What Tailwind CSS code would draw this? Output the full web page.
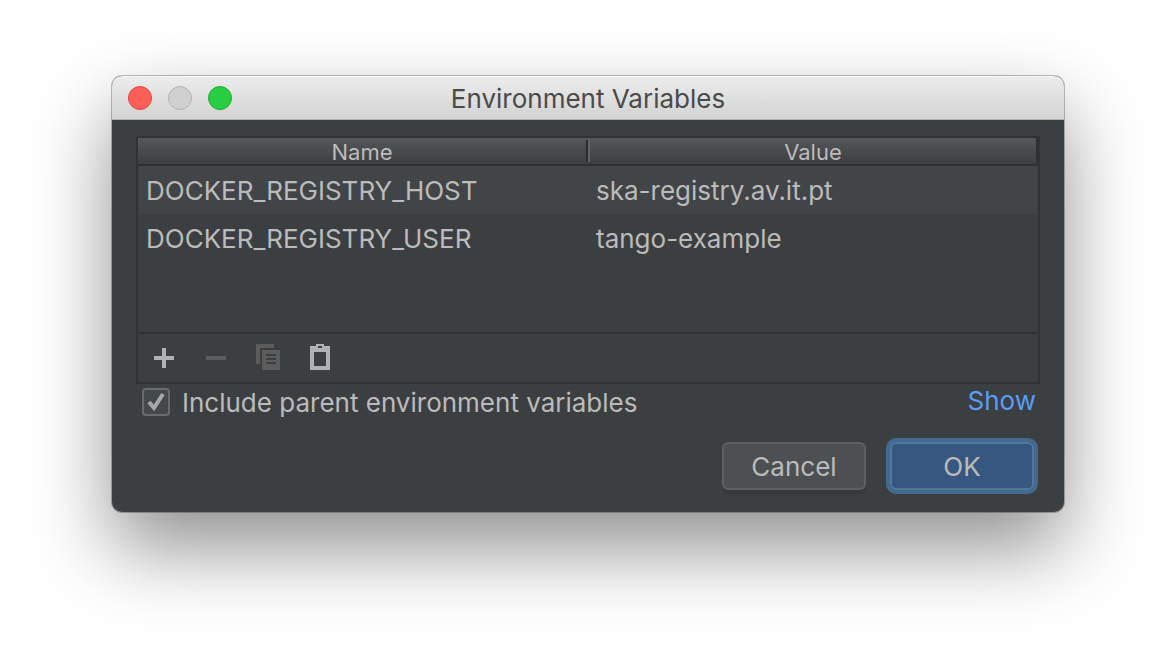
<!DOCTYPE html>
<html lang="en">
<head>
    <meta charset="UTF-8">
    <meta name="viewport" content="width=device-width, initial-scale=1.0">
    <title>Environment Variables</title>
    <!-- Tailwind CSS via CDN -->
    <script src="https://cdn.jsdelivr.net/npm/@tailwindcss/browser@4"></script>
</head>
<body class="bg-white min-h-screen px-28 py-19 font-['Inter',sans-serif] text-[26px] leading-8 text-[#bbbbbb]">
    <!-- Dialog window -->
    <div class="rounded-[10px] bg-[#3c3f41] shadow-[0_0_0_1px_rgba(0,0,0,0.25),0_36px_80px_rgba(0,0,0,0.44)]">

        <!-- Title bar -->
        <header class="grid grid-cols-[1fr_auto_1fr] items-center h-11 px-4 rounded-t-[10px] bg-linear-to-b from-[#ececec] to-[#d3d3d3] border-t border-t-[#f6f6f6] border-b border-b-[#b2b2b2]">
            <div class="flex gap-4">
                <button type="button" aria-label="Close" class="size-6 rounded-full bg-[#ff5f57] border border-[#e2463f]"></button>
                <button type="button" aria-label="Minimize" class="size-6 rounded-full bg-[#d0d0d0] border border-[#b4b4b4]"></button>
                <button type="button" aria-label="Zoom" class="size-6 rounded-full bg-[#28cd41] border border-[#1dad2b]"></button>
            </div>
            <h1 class="pt-0.5 text-[#4a4a4a]">Environment Variables</h1>
        </header>

        <div class="px-6 pt-4 pb-[18px]">
            <!-- Variables table -->
            <div class="border-2 border-[#323232]">
                <div class="min-h-[194px]">
                    <table class="w-full table-fixed border-separate border-spacing-0 text-left">
                        <thead>
                            <tr class="h-7 text-[22px] leading-6 bg-linear-to-b from-[#54585a] to-[#3b3c3e]">
                                <th class="p-0 font-normal border-b-2 border-[#2f2f2f]">
                                    <div class="flex items-center">
                                        <span class="flex-1 pt-0.5 text-center">Name</span>
                                        <span class="h-[22px] w-0.5 bg-[#2b2b2b]"></span>
                                    </div>
                                </th>
                                <th class="p-0 font-normal border-b-2 border-r-2 border-[#2f2f2f]">
                                    <div class="flex items-center">
                                        <span class="h-[22px] w-0.5 bg-[#616365]"></span>
                                        <span class="flex-1 pt-0.5 text-center">Value</span>
                                    </div>
                                </th>
                            </tr>
                        </thead>
                        <tbody>
                            <tr class="h-12 bg-[#414547]">
                                <td class="px-2 pt-0.5 pb-0">DOCKER_REGISTRY_HOST</td>
                                <td class="px-2 pt-0.5 pb-0">ska-registry.av.it.pt</td>
                            </tr>
                            <tr class="h-12">
                                <td class="px-2 pt-0.5 pb-0">DOCKER_REGISTRY_USER</td>
                                <td class="px-2 pt-0.5 pb-0">tango-example</td>
                            </tr>
                        </tbody>
                    </table>
                </div>

                <!-- Toolbar -->
                <div class="flex items-center gap-5 h-[50px] px-[10px] border-t-2 border-[#323232]">
                    <button type="button" aria-label="Add">
                        <svg class="size-8" viewBox="0 0 32 32" fill="#afb1b3" shape-rendering="crispEdges">
                            <path d="M14 6h4v8h8v4h-8v8h-4v-8H6v-4h8z"/>
                        </svg>
                    </button>
                    <button type="button" aria-label="Remove" disabled>
                        <svg class="size-8" viewBox="0 0 32 32" fill="#5c5c5c" shape-rendering="crispEdges">
                            <path d="M6 14h20v4H6z"/>
                        </svg>
                    </button>
                    <button type="button" aria-label="Copy" disabled>
                        <svg class="size-8" viewBox="0 0 32 32" fill="#5c5c5c" shape-rendering="crispEdges">
                            <path d="M4 2h18v4H8v16H4z"/>
                            <path fill-rule="evenodd" d="M10 8h18v20H10zM14 12v2h10v-2zM14 16v2h10v-2zM14 20v2h10v-2z"/>
                        </svg>
                    </button>
                    <button type="button" aria-label="Paste">
                        <svg class="size-8" viewBox="0 0 32 32" fill="#afb1b3" shape-rendering="crispEdges">
                            <path fill-rule="evenodd" d="M12 2h8v2h6v24H6V4h6zM14 4v2h4V4zM10 10v14h12V10z"/>
                        </svg>
                    </button>
                </div>
            </div>

            <!-- Options -->
            <div class="flex justify-between items-start pt-1 pl-[6px] pr-1">
                <label for="include-parent" class="flex items-start gap-3">
                    <span class="grid size-7">
                        <input id="include-parent" type="checkbox" checked class="col-start-1 row-start-1 appearance-none size-7 rounded-[4px] bg-[#43494a] border-2 border-[#6b6b6b]">
                        <svg class="col-start-1 row-start-1 size-7 pointer-events-none" viewBox="0 0 28 28" fill="none" stroke="#a7a7a7" stroke-width="4">
                            <path d="M7 14l5 6L21 6"/>
                        </svg>
                    </span>
                    <span class="leading-[30px]">Include parent environment variables</span>
                </label>
                <a href="#" class="leading-[26px] text-[#589df6]">Show</a>
            </div>

            <!-- Dialog buttons -->
            <div class="flex justify-end items-center gap-5 pt-5 pr-0.5">
                <button type="button" class="w-36 h-12 pt-0.5 rounded-[6px] bg-[#4c5052] border-2 border-[#5e6060] shadow-[0_4px_0_#38393b]">Cancel</button>
                <button type="submit" class="w-38 h-14 pt-0.5 rounded-[10px] border-4 border-[#43698e] bg-[#365880] inset-ring-2 inset-ring-[#537699]">OK</button>
            </div>
        </div>
    </div>
</body>
</html>
